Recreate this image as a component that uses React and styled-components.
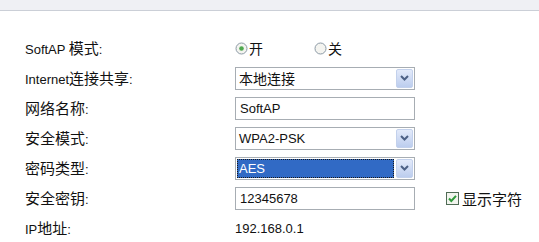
import React from "react";
import styled, { createGlobalStyle, css } from "styled-components";

const GlobalStyle = createGlobalStyle`
  html, body {
    margin: 0;
    padding: 0;
    background: #fff;
  }
  body {
    font-family: "Liberation Sans", "Noto Sans CJK SC", sans-serif;
    font-size: 13px;
    color: #111;
  }
`;

const TopBar = styled.div`
  height: 10px;
  background: #eff0f4;
  border-bottom: 1px solid #cbcfd7;
`;

const Form = styled.div`
  display: grid;
  grid-template-columns: 210px 180px auto;
  grid-auto-rows: 30px;
  align-items: center;
  padding: 22px 0 0 25px;
`;

const Han = styled.span`
  font-family: "Noto Sans CJK SC", sans-serif;
  font-size: ${({ $size }) => $size}px;
`;

const Label = styled.div`
  grid-column: 1;
  line-height: 1;
  white-space: nowrap;
`;

const Cell = styled.div`
  grid-column: 2;
  display: flex;
  align-items: center;
`;

const Extra = styled.div`
  grid-column: 3;
  padding-left: 31px;
  display: flex;
  align-items: center;
  gap: 3px;
`;

const RadioOption = styled.div`
  width: 79px;
  display: flex;
  align-items: center;
  gap: 1px;
  line-height: 1;
`;

const SelectBox = styled.div`
  box-sizing: border-box;
  width: 180px;
  height: 23px;
  border: 1px solid #a7adb3;
  background: #fff;
  display: flex;
  align-items: stretch;
  padding: 1px;
`;

const SelectValue = styled.div`
  flex: 1;
  display: flex;
  align-items: center;
  padding-left: 2px;
  line-height: 1;
  ${({ $selected }) =>
    $selected &&
    css`
      background: #316ac5;
      color: #fff;
      outline: 1px dotted #1a1a1a;
      outline-offset: -1px;
    `}
`;

const ArrowButton = styled.div`
  box-sizing: border-box;
  width: 17px;
  margin-left: 2px;
  border: 1px solid #c3d1ec;
  border-radius: 2px;
  background: linear-gradient(#e3eafa, #bccdee);
  display: flex;
  align-items: center;
  justify-content: center;
`;

const TextBox = styled.div`
  box-sizing: border-box;
  width: 180px;
  height: 23px;
  border: 1px solid #a7adb3;
  background: #fff;
  display: flex;
  align-items: center;
  padding-left: 4px;
  line-height: 1;
`;

const PlainValue = styled.div`
  line-height: 1;
`;

const HAN_RE = /([\u4e00-\u9fff]+)/;

const mixed = (text, size) =>
  text.split(HAN_RE).map((part, i) =>
    HAN_RE.test(part) ? (
      <Han key={i} $size={size}>
        {part}
      </Han>
    ) : (
      part
    )
  );

const Radio = ({ checked }) => (
  <svg width="13" height="13" viewBox="0 0 13 13">
    <circle cx="6.5" cy="6.5" r="5.5" fill="#f4f4f0" stroke="#8c9aa6" />
    {checked && <circle cx="6.5" cy="6.5" r="2.3" fill="#4fa84f" />}
  </svg>
);

const Chevron = () => (
  <svg width="9" height="6" viewBox="0 0 9 6">
    <path d="M1 1 L4.5 4.5 L8 1" fill="none" stroke="#4d6185" strokeWidth="2" />
  </svg>
);

const Checkbox = () => (
  <svg width="13" height="13" viewBox="0 0 13 13">
    <rect x="0.5" y="0.5" width="12" height="12" fill="#f2f4ee" stroke="#4f6b55" />
    <path d="M3 6.5 L5.3 9 L10 3.8" fill="none" stroke="#2f9a3a" strokeWidth="2" />
  </svg>
);

const Select = ({ value, selected }) => (
  <SelectBox>
    <SelectValue $selected={selected}>{mixed(value, 14)}</SelectValue>
    <ArrowButton>
      <Chevron />
    </ArrowButton>
  </SelectBox>
);

const App = () => (
  <>
    <GlobalStyle />
    <TopBar />
    <Form>
      <Label>{mixed("SoftAP 模式:", 15)}</Label>
      <Cell>
        <RadioOption>
          <Radio checked />
          {mixed("开", 14)}
        </RadioOption>
        <RadioOption>
          <Radio />
          {mixed("关", 14)}
        </RadioOption>
      </Cell>

      <Label>{mixed("Internet连接共享:", 15)}</Label>
      <Cell>
        <Select value="本地连接" />
      </Cell>

      <Label>{mixed("网络名称:", 15)}</Label>
      <Cell>
        <TextBox>SoftAP</TextBox>
      </Cell>

      <Label>{mixed("安全模式:", 15)}</Label>
      <Cell>
        <Select value="WPA2-PSK" />
      </Cell>

      <Label>{mixed("密码类型:", 15)}</Label>
      <Cell>
        <Select value="AES" selected />
      </Cell>

      <Label>{mixed("安全密钥:", 15)}</Label>
      <Cell>
        <TextBox>12345678</TextBox>
      </Cell>
      <Extra>
        <Checkbox />
        {mixed("显示字符", 15)}
      </Extra>

      <Label>{mixed("IP地址:", 15)}</Label>
      <Cell>
        <PlainValue>192.168.0.1</PlainValue>
      </Cell>
    </Form>
  </>
);

export default App;
